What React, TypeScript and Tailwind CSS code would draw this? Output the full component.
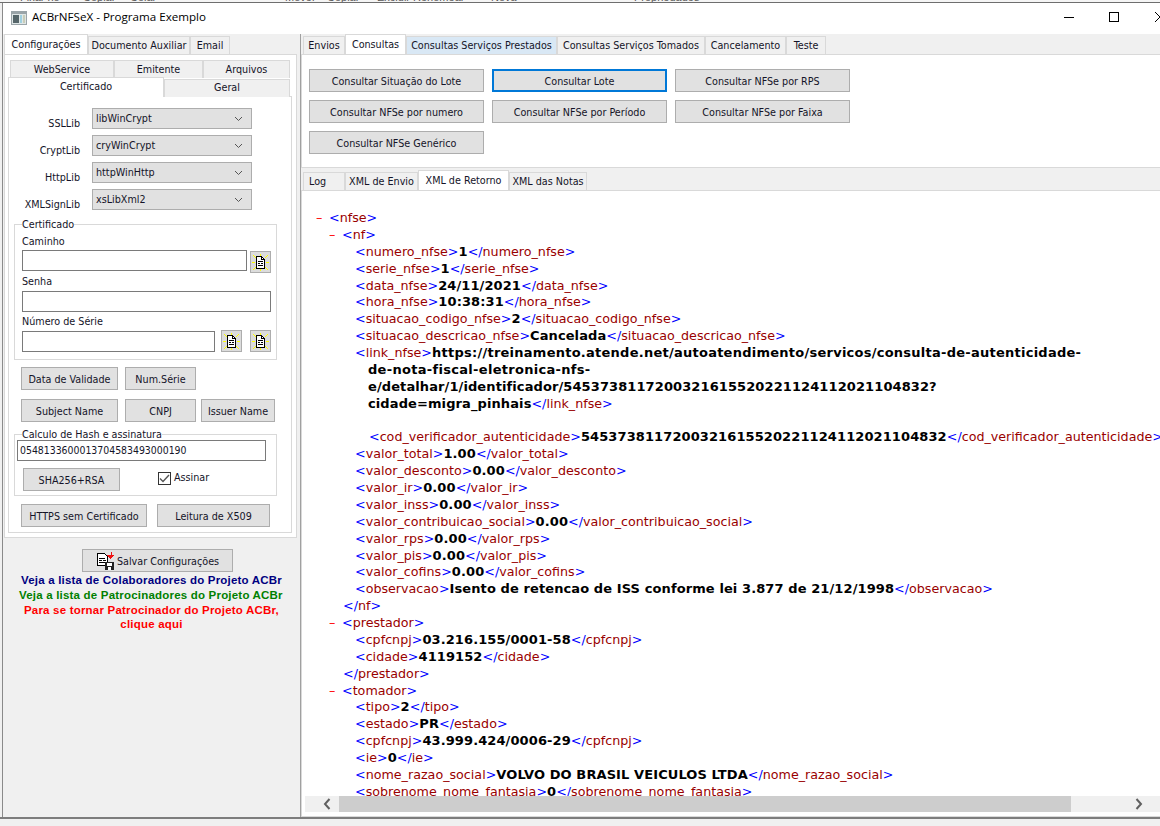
import type { ReactNode } from 'react'

const ui = "font-['DejaVu_Sans_Condensed','DejaVu_Sans',sans-serif] text-[10.700px] text-[#141428]"

function Btn({ className, children }: { className: string; children: ReactNode }) {
  return (
    <div className={`flex items-center justify-center shrink-0 pt-[3px] bg-[#e1e1e1] border border-[#adadad] ${className}`}>
      {children}
    </div>
  )
}

function Tab({ label, active, className }: { label: string; active?: boolean; className: string }) {
  return (
    <div
      className={
        active
          ? `relative z-10 flex justify-center pt-[2px] h-[20px] shrink-0 bg-white border border-b-0 border-[#d9d9d9] ${className}`
          : `flex items-center justify-center pt-[2px] h-[18px] shrink-0 bg-[#f0f0f0] border border-b-0 border-[#d9d9d9] ${className}`
      }
    >
      {label}
    </div>
  )
}

function Combo({ label, value }: { label: string; value: string }) {
  return (
    <div className="flex h-[21px] items-start gap-[12px]">
      <div className="w-[71px] pt-[8px] text-right">{label}</div>
      <div className="flex h-[21px] w-[160px] items-center justify-between border border-[#adadad] bg-[#e1e1e1] pl-[3px] pr-[8px] pt-[1px]">
        <span>{value}</span>
        <svg width="9" height="6" viewBox="0 0 9 6" fill="none" stroke="#555">
          <path d="M1 1l3.5 3.5L8 1" />
        </svg>
      </div>
    </div>
  )
}

function DocIcon() {
  return (
    <svg width="17" height="17" viewBox="0 0 17 17" shapeRendering="crispEdges" className="-mt-[3px]">
      <path d="M1 1l3 3M16 1l-3 3M1 16l3-3M16 16l-3-3M0 8.500h3M14 8.500h3M8.500 0v2M8.500 15v2" stroke="#ffff00" fill="none" />
      <path d="M4.500 2.500h5l3 3v9h-8z" fill="#fff" stroke="#000" />
      <path d="M9.500 2.500v3h3M6 7.500h5M6 9.500h2M9 9.500h2M6 11.500h5" fill="none" stroke="#000" />
    </svg>
  )
}

function SaveIcon() {
  return (
    <svg width="19" height="18" viewBox="0 0 19 18" shapeRendering="crispEdges" className="-mt-[3px] mr-[1px]">
      <path d="M1.500 1.500h7l3 3v9h-10z" fill="#fff" stroke="#000" />
      <path d="M3 6.500h6M3 8.500h3M7 8.500h3M3 10.500h6" stroke="#000" fill="none" />
      <path d="M12 3h3v-3h1v3h2l-3.500 4-3.500-4z" fill="#ee1111" />
      <path d="M9 10h9v8H9z" fill="#222" />
      <path d="M11 11h5v3h-5zM12 15h3v3h-3z" fill="#fff" />
    </svg>
  )
}

function Left() {
  return (
    <div className="w-[298px] shrink-0 border-r border-[#a0a0a0] pl-[1px]">
      <div className="flex h-[20px] items-end">
        <Tab label="Configurações" active className="w-[84px]" />
        <Tab label="Documento Auxiliar" className="w-[102px]" />
        <Tab label="Email" className="w-[40px]" />
      </div>
      <div className="h-[484px] w-[293px] border border-[#d9d9d9] bg-white pt-[5px]">
        <div className="ml-[5px] flex">
          <Tab label="WebService" className="w-[104px]" />
          <Tab label="Emitente" className="w-[89px]" />
          <Tab label="Arquivos" className="w-[87px]" />
        </div>
        <div className="-mt-[1px] ml-[3px] flex items-end">
          <Tab label="Certificado" active className="w-[156px] !pt-[1px]" />
          <Tab label="Geral" className="w-[126px] !pt-0" />
        </div>
        <div className="-mt-[1px] ml-[3px] h-[437px] w-[284px] border border-[#d9d9d9] pt-[11px]">
          <div className="flex flex-col gap-[6px]">
            <Combo label="SSLLib" value="libWinCrypt" />
            <Combo label="CryptLib" value="cryWinCrypt" />
            <Combo label="HttpLib" value="httpWinHttp" />
            <Combo label="XMLSignLib" value="xsLibXml2" />
          </div>

          <div className="ml-[5px] mt-[14px] h-[136px] w-[263px] border border-[#d9d9d9] px-[7px]">
            <div className="-mt-[7px] w-fit bg-white leading-[13px]">Certificado</div>
            <div className="mt-[4px] leading-[14px]">Caminho</div>
            <div className="mt-[1px] flex gap-[3px]">
              <div className="h-[21px] w-[225px] shrink-0 border border-[#7a7a7a]" />
              <Btn className="mt-[1px] h-[22px] w-[21px] !bg-[#dcdcdc]">
                <DocIcon />
              </Btn>
            </div>
            <div className="mt-[2px] leading-[14px]">Senha</div>
            <div className="mt-[2px] h-[21px] w-[249px] border border-[#7a7a7a]" />
            <div className="mt-[3px] leading-[14px]">Número de Série</div>
            <div className="mt-[1px] flex items-start">
              <div className="mt-[1px] h-[21px] w-[193px] shrink-0 border border-[#7a7a7a]" />
              <Btn className="ml-[6px] h-[22px] w-[21px] !bg-[#dcdcdc]">
                <DocIcon />
              </Btn>
              <Btn className="ml-[8px] h-[22px] w-[21px] !bg-[#dcdcdc]">
                <DocIcon />
              </Btn>
            </div>
          </div>

          <div className="ml-[12px] mt-[7px] flex gap-[7px]">
            <Btn className="h-[23px] w-[97px]">Data de Validade</Btn>
            <Btn className="h-[23px] w-[71px]">Num.Série</Btn>
          </div>
          <div className="ml-[12px] mt-[9px] flex">
            <Btn className="h-[23px] w-[97px]">Subject Name</Btn>
            <Btn className="ml-[7px] h-[23px] w-[71px]">CNPJ</Btn>
            <Btn className="ml-[5px] h-[23px] w-[74px]">Issuer Name</Btn>
          </div>

          <div className="ml-[5px] mt-[12px] h-[62px] w-[263px] border border-[#d9d9d9] pl-[2px]">
            <div className="-mt-[7px] ml-[5px] w-fit bg-white leading-[13px]">Calculo de Hash e assinatura</div>
            <div className="-mt-[1px] flex h-[21px] w-[249px] items-center border border-[#7a7a7a] pl-[2px] text-[10.400px]">
              0548133600013704583493000190
            </div>
            <div className="ml-[6px] mt-[7px] flex items-start">
              <Btn className="h-[23px] w-[97px]">SHA256+RSA</Btn>
              <div className="ml-[38px] mt-[2px] flex items-center gap-[3px]">
                <div className="flex h-[13px] w-[13px] items-center justify-center border border-[#333] bg-white">
                  <svg width="11" height="9" viewBox="0 0 11 9" fill="none" stroke="#555" strokeWidth="1.400">
                    <path d="M1 4.500l3 3 6-6.500" />
                  </svg>
                </div>
                <span>Assinar</span>
              </div>
            </div>
          </div>

          <div className="ml-[12px] mt-[8px] flex gap-[10px]">
            <Btn className="h-[23px] w-[126px]">HTTPS sem Certificado</Btn>
            <Btn className="h-[23px] w-[113px]">Leitura de X509</Btn>
          </div>
        </div>
      </div>

      <Btn className="ml-[78px] mt-[11px] h-[23px] w-[151px] gap-[1px]">
        <SaveIcon />
        Salvar Configurações
      </Btn>
      <div className="mt-[1px] w-[297px] text-center font-['Liberation_Sans',sans-serif] text-[11.500px] font-bold leading-[15px] tracking-[0.2px]">
        <div className="overflow-hidden whitespace-nowrap pl-[17px] text-left text-[#000080]">
          Veja a lista de Colaboradores do Projeto ACBr
        </div>
        <div className="overflow-hidden whitespace-nowrap pl-[15px] text-left text-[#008000]">
          Veja a lista de Patrocinadores do Projeto ACBr
        </div>
        <div className="whitespace-nowrap pr-[2px] text-[#ff0000]">Para se tornar Patrocinador do Projeto ACBr,</div>
        <div className="-mt-[1px] pr-[2px] text-[#ff0000]">clique aqui</div>
      </div>
    </div>
  )
}

function Open({ n }: { n: string }) {
  return (
    <>
      <span className="text-[#0000ff]">&lt;</span>
      <span className="text-[#990000]">{n}</span>
      <span className="text-[#0000ff]">&gt;</span>
    </>
  )
}

function Close({ n }: { n: string }) {
  return (
    <>
      <span className="text-[#0000ff]">&lt;/</span>
      <span className="text-[#990000]">{n}</span>
      <span className="text-[#0000ff]">&gt;</span>
    </>
  )
}

function El({ n, v, pad = 'pl-[53px]' }: { n: string; v: string; pad?: string }) {
  return (
    <div className={pad}>
      <Open n={n} />
      <b className="text-[13px] tracking-[0.1px] text-black">{v}</b>
      <Close n={n} />
    </div>
  )
}

function Branch({ n, pad }: { n: string; pad: string }) {
  return (
    <div className={`flex ${pad}`}>
      <span className="w-[13px] text-[#ff0000]">–</span>
      <span>
        <Open n={n} />
      </span>
    </div>
  )
}

const nfRows1 = [
  ['numero_nfse', '1'],
  ['serie_nfse', '1'],
  ['data_nfse', '24/11/2021'],
  ['hora_nfse', '10:38:31'],
  ['situacao_codigo_nfse', '2'],
  ['situacao_descricao_nfse', 'Cancelada'],
]

const nfRows2 = [
  ['valor_total', '1.00'],
  ['valor_desconto', '0.00'],
  ['valor_ir', '0.00'],
  ['valor_inss', '0.00'],
  ['valor_contribuicao_social', '0.00'],
  ['valor_rps', '0.00'],
  ['valor_pis', '0.00'],
  ['valor_cofins', '0.00'],
  ['observacao', 'Isento de retencao de ISS conforme lei 3.877 de 21/12/1998'],
]

const tomador = [
  ['tipo', '2'],
  ['estado', 'PR'],
  ['cpfcnpj', '43.999.424/0006-29'],
  ['ie', '0'],
  ['nome_razao_social', 'VOLVO DO BRASIL VEICULOS LTDA'],
  ['sobrenome_nome_fantasia', '0'],
]

function Xml() {
  return (
    <div className="min-h-0 flex-1 overflow-hidden whitespace-nowrap pt-[19px] font-['DejaVu_Sans',sans-serif] text-[12.700px] leading-[16.880px]">
      <Branch n="nfse" pad="pl-[14px]" />
      <Branch n="nf" pad="pl-[27px]" />
      {nfRows1.map(([n, v]) => (
        <El key={n} n={n} v={v} />
      ))}
      <div className="pl-[53px]">
        <Open n="link_nfse" />
        <b className="text-[13px] tracking-[0.25px] text-black">
          https://treinamento.atende.net/autoatendimento/servicos/consulta-de-autenticidade-
        </b>
      </div>
      <div className="pl-[66px] text-[13px] font-bold tracking-[0.3px] text-black">de-nota-fiscal-eletronica-nfs-</div>
      <div className="pl-[66px] text-[13px] font-bold tracking-[0.1px] text-black">
        e/detalhar/1/identificador/5453738117200321615520221124112021104832?
      </div>
      <div className="pl-[66px]">
        <b className="text-[13px] tracking-[0.1px] text-black">cidade=migra_pinhais</b>
        <Close n="link_nfse" />
      </div>
      <div className="h-[16.880px]" />
      <El n="cod_verificador_autenticidade" v="5453738117200321615520221124112021104832" pad="pl-[67px]" />
      {nfRows2.map(([n, v]) => (
        <El key={n} n={n} v={v} />
      ))}
      <div className="pl-[41px]">
        <Close n="nf" />
      </div>
      <Branch n="prestador" pad="pl-[27px]" />
      <El n="cpfcnpj" v="03.216.155/0001-58" />
      <El n="cidade" v="4119152" />
      <div className="pl-[41px]">
        <Close n="prestador" />
      </div>
      <Branch n="tomador" pad="pl-[27px]" />
      {tomador.map(([n, v]) => (
        <El key={n} n={n} v={v} />
      ))}
    </div>
  )
}

function Right() {
  return (
    <div className="flex min-w-0 flex-1 flex-col">
      <div className="flex h-[20px] items-end pl-[2px]">
        <Tab label="Envios" className="w-[42px]" />
        <Tab label="Consultas" active className="w-[61px]" />
        <Tab label="Consultas Serviços Prestados" className="w-[151px] !bg-[#d9e8f5]" />
        <Tab label="Consultas Serviços Tomados" className="w-[148px]" />
        <Tab label="Cancelamento" className="w-[81px]" />
        <Tab label="Teste" className="w-[40px]" />
      </div>
      <div className="h-[114px] border border-r-0 border-[#d9d9d9] bg-white pl-[7px] pt-[14px]">
        <div className="grid w-fit grid-cols-[175px_175px_175px] gap-x-[8px] gap-y-[8px]">
          <Btn className="h-[23px]">Consultar Situação do Lote</Btn>
          <Btn className="h-[23px] border-2 !border-[#0078d7]">Consultar Lote</Btn>
          <Btn className="h-[23px]">Consultar NFSe por RPS</Btn>
          <Btn className="h-[23px]">Consultar NFSe por numero</Btn>
          <Btn className="h-[23px]">Consultar NFSe por Período</Btn>
          <Btn className="h-[23px]">Consultar NFSe por Faixa</Btn>
          <Btn className="h-[23px]">Consultar NFSe Genérico</Btn>
        </div>
      </div>
      <div className="mt-[2px] flex h-[20px] items-end pl-[2px]">
        <Tab label="Log" className="w-[42px] !justify-start pl-[5px]" />
        <Tab label="XML de Envio" className="w-[73px]" />
        <Tab label="XML de Retorno" active className="w-[91px]" />
        <Tab label="XML das Notas" className="w-[78px]" />
      </div>
      <div className="flex min-h-0 flex-1 flex-col border border-r-0 border-[#d9d9d9] bg-white pb-[4px]">
        <Xml />
        <div className="ml-[3px] flex h-[16px] shrink-0 items-center bg-[#f0f0f0]">
          <div className="flex w-[34px] justify-center pl-[10px]">
            <svg width="8" height="12" viewBox="0 0 8 12" fill="none" stroke="#606060" strokeWidth="2">
              <path d="M6.500 1L2 6l4.500 5" />
            </svg>
          </div>
          <div className="h-full w-[732px] bg-[#cdcdcd]" />
          <div className="flex flex-1 justify-end pr-[17px]">
            <svg width="8" height="12" viewBox="0 0 8 12" fill="none" stroke="#606060" strokeWidth="2">
              <path d="M1.500 1L6 6l-4.500 5" />
            </svg>
          </div>
        </div>
      </div>
    </div>
  )
}

export default function App() {
  return (
    <div className={`flex h-[826px] w-[1160px] flex-col overflow-hidden bg-[#f0f0f0] ${ui}`}>
      {/* Explorer window behind, only its ribbon bottom shows */}
      <div className="flex h-[3px] shrink-0 overflow-hidden border-b border-[#6e6e6e] bg-[#f5f5f5] text-[#555]">
        <div className="-mt-[9px] flex whitespace-nowrap pl-[20px] font-['Liberation_Sans',sans-serif] text-[11px] leading-[12px]">
          <span className="w-[63px]">Fixar no</span>
          <span className="w-[47px]">Copiar</span>
          <span className="w-[155px]">Colar</span>
          <span className="w-[42px]">Mover</span>
          <span className="w-[50px]">Copiar</span>
          <span className="w-[114px]">Excluir Renomear</span>
          <span className="w-[143px]">Nova</span>
          <span>Propriedades</span>
        </div>
      </div>

      <div className="ml-[2px] flex min-h-0 flex-1 flex-col border-l border-[#8a8a8a]">
        <div className="flex h-[31px] shrink-0 items-center bg-white pl-[8px]">
          <svg width="16" height="14" viewBox="0 0 16 14" shapeRendering="crispEdges" className="mb-[1px]">
            <path d="M0 0h16v14H0z" fill="#9aa4a8" />
            <path d="M1 3h14v10H1z" fill="#dfe6e6" />
            <path d="M2 4h6v8H2z" fill="#56666a" />
            <path d="M9 4h2v8H9z" fill="#9fd0e0" />
            <path d="M12 4h2v8h-2z" fill="#c8ccb8" />
          </svg>
          <span className="ml-[5px] pb-[3px] font-['Open_Sans',sans-serif] text-[11.600px] text-black">
            ACBrNFSeX - Programa Exemplo
          </span>
          <div className="ml-auto flex items-center pb-[3px]">
            <div className="h-[1px] w-[10px] bg-black" />
            <div className="ml-[35px] h-[10px] w-[10px] border border-black" />
            <svg width="5" height="12" viewBox="0 0 5 12" className="ml-[36px]" fill="none" stroke="#000">
              <path d="M0 1l5 5M0 11l5-5" />
            </svg>
          </div>
        </div>
        <div className="flex min-h-0 flex-1">
          <Left />
          <Right />
        </div>
      </div>

      <div className="h-[9px] shrink-0 border-t-2 border-[#7d7d7d]" />
    </div>
  )
}
